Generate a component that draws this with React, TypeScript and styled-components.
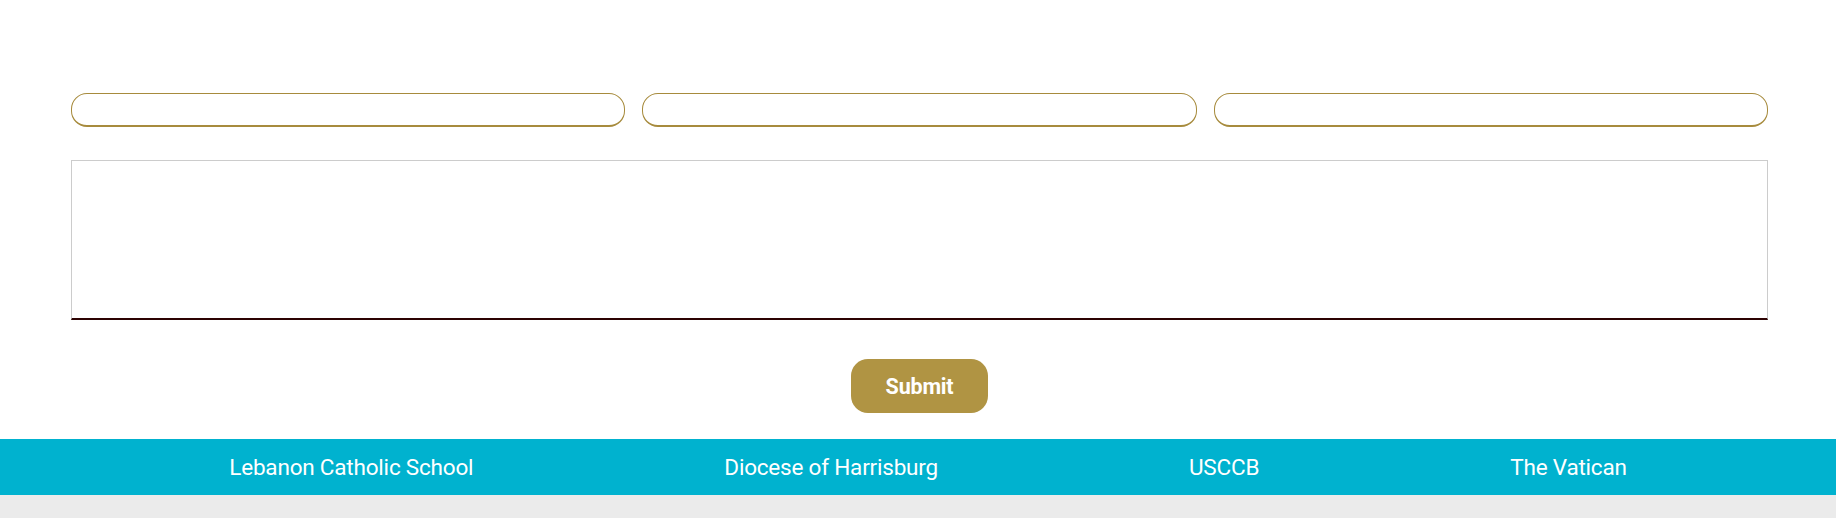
import React from "react";
import styled, { createGlobalStyle } from "styled-components";

const GlobalStyle = createGlobalStyle`
  html, body {
    margin: 0;
    padding: 0;
    background: #ffffff;
  }
  body {
    font-family: "Roboto", "Liberation Sans", sans-serif;
  }
  * {
    box-sizing: border-box;
  }
`;

const Page = styled.div`
  display: flex;
  flex-direction: column;
  min-height: 518px;
  background: #ebebeb;
`;

const FormSection = styled.form`
  display: flex;
  flex-direction: column;
  background: #ffffff;
  padding: 93px 68px 26px 71px;
`;

const FieldRow = styled.div`
  display: grid;
  grid-template-columns: repeat(3, 1fr);
  gap: 17px;
`;

const TextField = styled.input`
  height: 34px;
  width: 100%;
  border: 1px solid #a78b3d;
  border-bottom-width: 2px;
  border-radius: 16px;
  background: #fff;
  padding: 0 16px;
  font: inherit;
  font-size: 16px;
  outline: none;
`;

const Message = styled.textarea`
  margin-top: 33px;
  height: 160px;
  width: 100%;
  border: 1px solid #cccccc;
  border-bottom: 2px solid #2d0303;
  border-radius: 0;
  resize: none;
  font: inherit;
  outline: none;
`;

const Actions = styled.div`
  display: flex;
  justify-content: center;
  margin-top: 39px;
`;

const SubmitButton = styled.button`
  width: 137px;
  height: 54px;
  border: none;
  border-radius: 17px;
  background: #b09443;
  color: #ffffff;
  font-family: "Roboto", "Liberation Sans", sans-serif;
  font-weight: 700;
  font-size: 21.5px;
  letter-spacing: -0.2px;
  cursor: pointer;
`;

const LinkBar = styled.nav`
  display: flex;
  justify-content: center;
  align-items: center;
  gap: 251px;
  height: 56px;
  padding-left: 20px;
  background: #00b2cf;
`;

const LinkItem = styled.a`
  color: #ffffff;
  font-size: 22.5px;
  letter-spacing: -0.2px;
  text-decoration: none;
  white-space: nowrap;
`;

const links = [
  "Lebanon Catholic School",
  "Diocese of Harrisburg",
  "USCCB",
  "The Vatican",
];

export default function App() {
  return (
    <>
      <GlobalStyle />
      <Page>
        <FormSection onSubmit={(e) => e.preventDefault()}>
          <FieldRow>
            <TextField type="text" />
            <TextField type="email" />
            <TextField type="text" />
          </FieldRow>
          <Message />
          <Actions>
            <SubmitButton type="submit">Submit</SubmitButton>
          </Actions>
        </FormSection>
        <LinkBar>
          {links.map((label) => (
            <LinkItem key={label} href="#">
              {label}
            </LinkItem>
          ))}
        </LinkBar>
      </Page>
    </>
  );
}
